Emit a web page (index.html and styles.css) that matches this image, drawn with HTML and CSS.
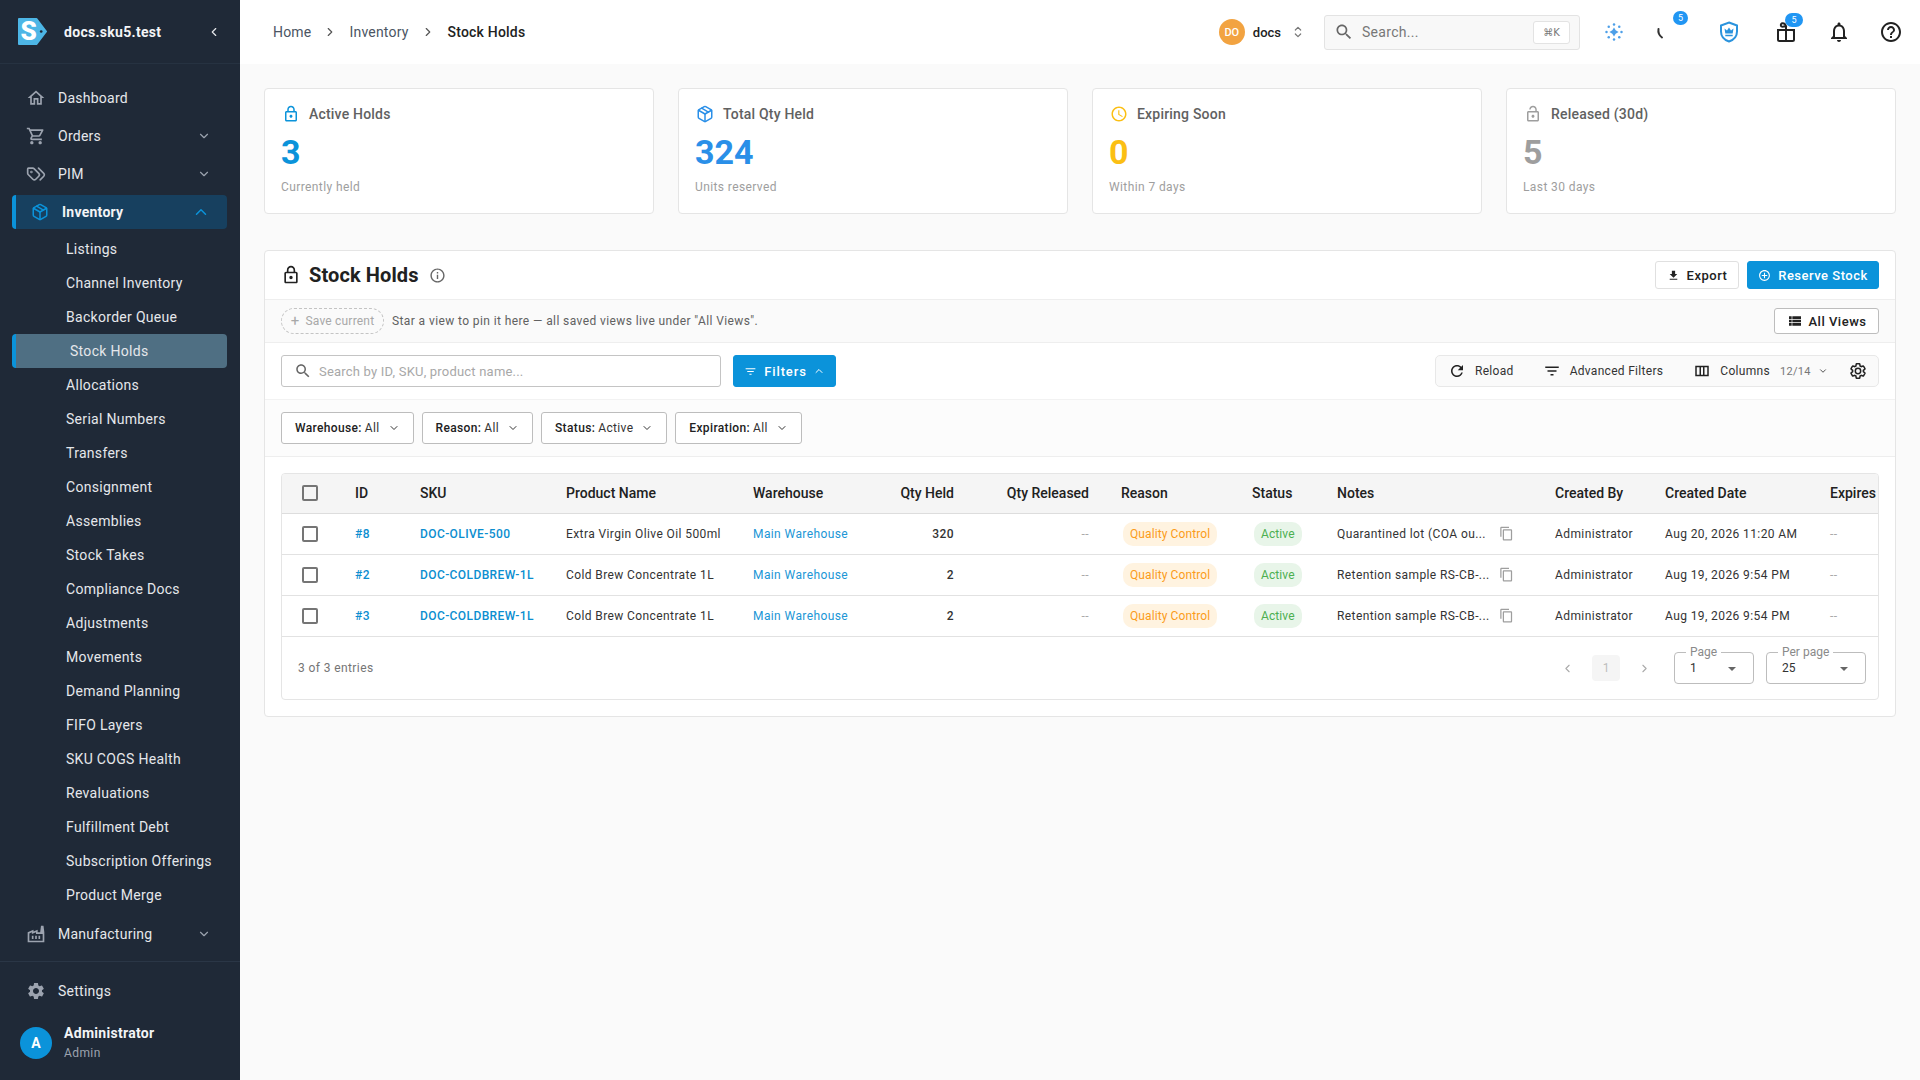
FILE: index.html
```html
<!doctype html>
<html lang="en">
  <head>
    <meta charset="UTF-8" />
    <meta name="viewport" content="width=device-width, initial-scale=1.0" />
    <title>Stock Holds</title>
    <link rel="stylesheet" href="styles.css">
  </head>
  <body>
    <!-- shared icons -->
    <svg class="sprite" xmlns="http://www.w3.org/2000/svg">
      <symbol id="i-lock" viewBox="0 0 24 24"><path d="M18 8h-1V6c0-2.76-2.24-5-5-5S7 3.24 7 6v2H6c-1.1 0-2 .9-2 2v10c0 1.1.9 2 2 2h12c1.1 0 2-.9 2-2V10c0-1.1-.9-2-2-2zM9 6c0-1.66 1.34-3 3-3s3 1.34 3 3v2H9V6zm9 14H6V10h12v10zm-6-3c1.1 0 2-.9 2-2s-.9-2-2-2-2 .9-2 2 .9 2 2 2z"/></symbol>
      <symbol id="i-unlock" viewBox="0 0 24 24"><path d="M12 17c1.1 0 2-.9 2-2s-.9-2-2-2-2 .9-2 2 .9 2 2 2zm6-9h-1V6c0-2.76-2.24-5-5-5S7 3.24 7 6h1.9c0-1.71 1.39-3.1 3.1-3.1 1.71 0 3.1 1.39 3.1 3.1v2H6c-1.1 0-2 .9-2 2v10c0 1.1.9 2 2 2h12c1.1 0 2-.9 2-2V10c0-1.1-.9-2-2-2zm0 12H6V10h12v10z"/></symbol>
      <symbol id="i-search" viewBox="0 0 24 24"><path d="M15.5 14h-.79l-.28-.27C15.41 12.59 16 11.11 16 9.5 16 5.91 13.09 3 9.5 3S3 5.91 3 9.5 5.91 16 9.5 16c1.61 0 3.09-.59 4.23-1.57l.27.28v.79l5 4.99L20.49 19l-4.99-5zm-6 0C7.01 14 5 11.99 5 9.5S7.01 5 9.5 5 14 7.01 14 9.5 11.99 14 9.5 14z"/></symbol>
      <symbol id="i-box" viewBox="0 0 24 24"><g fill="none" stroke="currentColor" stroke-width="2" stroke-linecap="round" stroke-linejoin="round"><path d="M11 21.73a2 2 0 0 0 2 0l7-4A2 2 0 0 0 21 16V8a2 2 0 0 0-1-1.73l-7-4a2 2 0 0 0-2 0l-7 4A2 2 0 0 0 3 8v8a2 2 0 0 0 1 1.73z"/><path d="M12 22V12"/><path d="M3.3 7l8.7 5 8.7-5"/><path d="M7.5 4.27l9 5.15"/></g></symbol>
      <symbol id="i-gear" viewBox="0 0 24 24"><path d="M19.14 12.94c.04-.3.06-.61.06-.94 0-.32-.02-.64-.07-.94l2.03-1.58c.18-.14.23-.41.12-.61l-1.92-3.32c-.12-.22-.37-.29-.59-.22l-2.39.96c-.5-.38-1.03-.7-1.62-.94l-.36-2.54c-.04-.24-.24-.41-.48-.41h-3.84c-.24 0-.43.17-.47.41l-.36 2.54c-.59.24-1.13.57-1.62.94l-2.39-.96c-.22-.08-.47 0-.59.22L2.74 8.87c-.12.21-.08.47.12.61l2.03 1.58c-.05.3-.09.63-.09.94s.02.64.07.94l-2.03 1.58c-.18.14-.23.41-.12.61l1.92 3.32c.12.22.37.29.59.22l2.39-.96c.5.38 1.03.7 1.62.94l.36 2.54c.05.24.24.41.48.41h3.84c.24 0 .44-.17.47-.41l.36-2.54c.59-.24 1.13-.56 1.62-.94l2.39.96c.22.08.47 0 .59-.22l1.92-3.32c.12-.22.07-.47-.12-.61l-2.01-1.58zM12 15.6c-1.98 0-3.6-1.62-3.6-3.6s1.62-3.6 3.6-3.6 3.6 1.62 3.6 3.6-1.62 3.6-3.6 3.6z"/></symbol>
      <symbol id="i-down" viewBox="0 0 24 24"><path d="M6 9l6 6 6-6" fill="none" stroke="currentColor" stroke-width="2" stroke-linecap="round" stroke-linejoin="round"/></symbol>
      <symbol id="i-up" viewBox="0 0 24 24"><path d="M6 15l6-6 6 6" fill="none" stroke="currentColor" stroke-width="2" stroke-linecap="round" stroke-linejoin="round"/></symbol>
      <symbol id="i-right" viewBox="0 0 24 24"><path d="M9 6l6 6-6 6" fill="none" stroke="currentColor" stroke-width="2" stroke-linecap="round" stroke-linejoin="round"/></symbol>
      <symbol id="i-left" viewBox="0 0 24 24"><path d="M15 6l-6 6 6 6" fill="none" stroke="currentColor" stroke-width="2" stroke-linecap="round" stroke-linejoin="round"/></symbol>
      <symbol id="i-filter" viewBox="0 0 24 24"><path d="M10 18h4v-2h-4v2zM3 6v2h18V6H3zm3 7h12v-2H6v2z"/></symbol>
      <symbol id="i-copy" viewBox="0 0 24 24"><path d="M16 1H4c-1.1 0-2 .9-2 2v14h2V3h12V1zm3 4H8c-1.1 0-2 .9-2 2v14c0 1.1.9 2 2 2h11c1.1 0 2-.9 2-2V7c0-1.1-.9-2-2-2zm0 16H8V7h11v14z"/></symbol>
    </svg>

    <div class="app">
      <aside class="sidebar">
        <div class="brand">
          <svg class="brand-logo" viewBox="0 0 30 30">
            <path d="M1 2h18l10 13-10 13H1z" fill="#4db6e6" stroke="#4db6e6" stroke-width="2" stroke-linejoin="round"/>
            <circle cx="24" cy="15" r="1.4" fill="#1f2937"/>
            <text x="11" y="24" class="brand-s">S</text>
          </svg>
          <span class="brand-name">docs.sku5.test</span>
          <svg class="icon brand-toggle"><use href="#i-left"/></svg>
        </div>

        <nav class="nav">
          <a class="nav-item">
            <svg class="nav-icon" viewBox="0 0 24 24"><path d="M12 5.69l5 4.5V18h-2v-6H9v6H7v-7.81l5-4.5M12 3L2 12h3v8h6v-6h2v6h6v-8h3L12 3z"/></svg>
            <span>Dashboard</span>
          </a>
          <a class="nav-item">
            <svg class="nav-icon" viewBox="0 0 24 24"><path d="M15.55 13c.75 0 1.41-.41 1.75-1.03l3.58-6.49c.37-.66-.11-1.48-.87-1.48H5.21l-.94-2H1v2h2l3.6 7.59-1.35 2.44C4.52 15.37 5.48 17 7 17h12v-2H7l1.1-2h7.45zM6.16 6h12.15l-2.76 5H8.53L6.16 6zM7 18c-1.1 0-1.99.9-1.99 2S5.9 22 7 22s2-.9 2-2-.9-2-2-2zm10 0c-1.1 0-1.99.9-1.99 2s.89 2 1.99 2 2-.9 2-2-.9-2-2-2z"/></svg>
            <span>Orders</span>
            <svg class="icon nav-chevron"><use href="#i-down"/></svg>
          </a>
          <a class="nav-item">
            <svg class="nav-icon nav-icon-line" viewBox="0 0 24 24"><path d="M15 5l6.3 6.3a2.4 2.4 0 0 1 0 3.4L17 19"/><path d="M9.586 5.586A2 2 0 0 0 8.172 5H3a1 1 0 0 0-1 1v5.172a2 2 0 0 0 .586 1.414L8.29 18.29a2.426 2.426 0 0 0 3.42 0l3.58-3.58a2.426 2.426 0 0 0 0-3.42z"/><circle cx="6.5" cy="9.5" r=".5"/></svg>
            <span>PIM</span>
            <svg class="icon nav-chevron"><use href="#i-down"/></svg>
          </a>
          <a class="nav-item nav-open">
            <svg class="icon nav-open-icon"><use href="#i-box"/></svg>
            <span>Inventory</span>
            <svg class="icon nav-open-chevron"><use href="#i-up"/></svg>
          </a>
          <ul class="subnav">
            <li>Listings</li>
            <li>Channel Inventory</li>
            <li>Backorder Queue</li>
            <li class="current">Stock Holds</li>
            <li>Allocations</li>
            <li>Serial Numbers</li>
            <li>Transfers</li>
            <li>Consignment</li>
            <li>Assemblies</li>
            <li>Stock Takes</li>
            <li>Compliance Docs</li>
            <li>Adjustments</li>
            <li>Movements</li>
            <li>Demand Planning</li>
            <li>FIFO Layers</li>
            <li>SKU COGS Health</li>
            <li>Revaluations</li>
            <li>Fulfillment Debt</li>
            <li>Subscription Offerings</li>
            <li>Product Merge</li>
          </ul>
          <a class="nav-item">
            <svg class="nav-icon" viewBox="0 0 24 24"><path d="M22 22H2V10l7-3v2l5-2v3h3l1-8h3l1 8v12zM12 9.95l-5 2V10l-3 1.32V20h16v-8h-8V9.95zM11 18h2v-4h-2v4zm-4 0h2v-4H7v4zm10-4h-2v4h2v-4z"/></svg>
            <span>Manufacturing</span>
            <svg class="icon nav-chevron"><use href="#i-down"/></svg>
          </a>
        </nav>

        <div class="sidebar-foot">
          <a class="nav-item">
            <svg class="nav-icon"><use href="#i-gear"/></svg>
            <span>Settings</span>
          </a>
          <div class="user">
            <span class="user-avatar">A</span>
            <div>
              <div class="user-name">Administrator</div>
              <div class="user-role">Admin</div>
            </div>
          </div>
        </div>
      </aside>

      <div class="main">
        <header class="topbar">
          <div class="crumbs">
            <span>Home</span>
            <svg class="icon"><use href="#i-right"/></svg>
            <span>Inventory</span>
            <svg class="icon"><use href="#i-right"/></svg>
            <span class="crumb-now">Stock Holds</span>
          </div>
          <div class="top-actions">
            <div class="tenant">
              <span class="tenant-avatar">DO</span>
              <span class="tenant-name">docs</span>
              <svg class="tenant-sort" viewBox="0 0 24 24"><path d="M8 9l4-4 4 4M8 15l4 4 4-4" fill="none" stroke="currentColor" stroke-width="1.8" stroke-linecap="round" stroke-linejoin="round"/></svg>
            </div>
            <div class="top-search">
              <svg class="icon"><use href="#i-search"/></svg>
              <span class="top-search-text">Search...</span>
              <kbd class="kbd">⌘K</kbd>
            </div>
            <svg class="top-icon top-sparkle" viewBox="0 0 24 24">
              <path d="M12 6.5l2 3.5 3.5 2-3.5 2-2 3.5-2-3.5-3.5-2 3.5-2z"/>
              <circle cx="12" cy="3" r="1.5"/><circle cx="12" cy="21" r="1.5"/><circle cx="3" cy="12" r="1.5"/><circle cx="21" cy="12" r="1.5"/>
              <circle cx="5.7" cy="5.7" r="1.5"/><circle cx="18.3" cy="5.7" r="1.5"/><circle cx="5.7" cy="18.3" r="1.5"/><circle cx="18.3" cy="18.3" r="1.5"/>
            </svg>
            <span class="top-btn top-moon">
              <svg class="top-icon" viewBox="0 0 24 24"><path d="M9.5 9c-.6 3.5.8 6.500 3.500 8.500" fill="none" stroke="#333" stroke-width="2" stroke-linecap="round"/></svg>
              <span class="badge">5</span>
            </span>
            <svg class="top-icon top-shield" viewBox="0 0 24 24">
              <path d="M12 2.500l8 3v6c0 4.800-3.300 8.400-8 10-4.700-1.600-8-5.200-8-10v-6z" fill="none" stroke="currentColor" stroke-width="2"/>
              <path d="M7.500 8.500l2.500 2 2-3 2 3 2.500-2-.8 5H8.300zM8.300 14.800h7.400v1.400H8.300z" fill="currentColor"/>
            </svg>
            <span class="top-btn top-gift">
              <svg class="top-icon" viewBox="0 0 24 24"><g fill="none" stroke="#222" stroke-width="2"><rect x="4" y="10" width="16" height="11" rx="1.500"/><path d="M3 10h18M12 6v15M12 6c-1.500-4-6-3.500-5 0 .3 1 2 1 5 0z"/></g></svg>
              <span class="badge">5</span>
            </span>
            <svg class="top-icon top-bell" viewBox="0 0 24 24"><path d="M12 22c1.100 0 2-.9 2-2h-4c0 1.100.9 2 2 2zm6-6v-5c0-3.070-1.630-5.640-4.500-6.320V4c0-.83-.67-1.500-1.500-1.500s-1.500.67-1.500 1.500v.68C7.640 5.360 6 7.920 6 11v5l-2 2v1h16v-1l-2-2zm-2 1H8v-6c0-2.480 1.510-4.500 4-4.500s4 2.020 4 4.500v6z"/></svg>
            <svg class="top-icon top-help" viewBox="0 0 24 24"><path d="M11 18h2v-2h-2v2zm1-16C6.480 2 2 6.480 2 12s4.480 10 10 10 10-4.480 10-10S17.520 2 12 2zm0 18c-4.410 0-8-3.590-8-8s3.590-8 8-8 8 3.590 8 8-3.590 8-8 8zm0-14c-2.210 0-4 1.790-4 4h2c0-1.100.9-2 2-2s2 .9 2 2c0 2-3 1.750-3 5h2c0-2.250 3-2.500 3-5 0-2.210-1.790-4-4-4z"/></svg>
          </div>
        </header>

        <main class="content">
          <section class="stats">
            <div class="stat">
              <div class="stat-head"><svg class="icon stat-icon tone-sky"><use href="#i-lock"/></svg>Active Holds</div>
              <div class="stat-value tone-sky">3</div>
              <div class="stat-note">Currently held</div>
            </div>
            <div class="stat">
              <div class="stat-head"><svg class="icon stat-icon tone-blue"><use href="#i-box"/></svg>Total Qty Held</div>
              <div class="stat-value tone-blue">324</div>
              <div class="stat-note">Units reserved</div>
            </div>
            <div class="stat">
              <div class="stat-head">
                <svg class="stat-icon tone-amber" viewBox="0 0 24 24"><path d="M11.990 2C6.470 2 2 6.480 2 12s4.470 10 9.990 10C17.520 22 22 17.520 22 12S17.520 2 11.990 2zM12 20c-4.420 0-8-3.580-8-8s3.580-8 8-8 8 3.580 8 8-3.580 8-8 8zm.5-13H11v6l5.250 3.150.75-1.230-4.500-2.670z"/></svg>
                Expiring Soon
              </div>
              <div class="stat-value tone-amber">0</div>
              <div class="stat-note">Within 7 days</div>
            </div>
            <div class="stat">
              <div class="stat-head"><svg class="icon stat-icon tone-grey"><use href="#i-unlock"/></svg>Released (30d)</div>
              <div class="stat-value tone-grey">5</div>
              <div class="stat-note">Last 30 days</div>
            </div>
          </section>

          <section class="panel">
            <div class="panel-head">
              <svg class="icon panel-lock"><use href="#i-lock"/></svg>
              <h1>Stock Holds</h1>
              <svg class="panel-info" viewBox="0 0 24 24"><path d="M11 7h2v2h-2zm0 4h2v6h-2zm1-9C6.480 2 2 6.480 2 12s4.480 10 10 10 10-4.480 10-10S17.520 2 12 2zm0 18c-4.410 0-8-3.590-8-8s3.590-8 8-8 8 3.590 8 8-3.590 8-8 8z"/></svg>
              <button class="btn btn-plain btn-export">
                <svg viewBox="0 0 24 24"><path d="M19 9h-4V3H9v6H5l7 7 7-7zM5 18v2h14v-2H5z"/></svg>Export
              </button>
              <button class="btn btn-primary btn-reserve">
                <svg viewBox="0 0 24 24"><path d="M13 7h-2v4H7v2h4v4h2v-4h4v-2h-4V7zm-1-5C6.480 2 2 6.480 2 12s4.480 10 10 10 10-4.480 10-10S17.520 2 12 2zm0 18c-4.410 0-8-3.590-8-8s3.590-8 8-8 8 3.590 8 8-3.590 8-8 8z"/></svg>Reserve Stock
              </button>
            </div>

            <div class="views-row">
              <span class="save-view"><b>+</b> Save current</span>
              <span class="views-hint">Star a view to pin it here — all saved views live under "All Views".</span>
              <button class="btn btn-plain btn-views">
                <svg viewBox="0 0 24 24"><path d="M3 14h4v-4H3v4zm0 5h4v-4H3v4zM3 9h4V5H3v4zm5 5h13v-4H8v4zm0 5h13v-4H8v4zM8 5v4h13V5H8z"/></svg>All Views
              </button>
            </div>

            <div class="search-row">
              <div class="search-box">
                <svg class="icon"><use href="#i-search"/></svg>
                <span>Search by ID, SKU, product name...</span>
              </div>
              <button class="btn btn-primary btn-filters">
                <svg viewBox="0 0 24 24"><use href="#i-filter"/></svg>Filters
                <svg class="btn-caret"><use href="#i-up"/></svg>
              </button>
              <div class="tools">
                <span class="tool tool-reload">
                  <svg viewBox="0 0 24 24"><path d="M17.650 6.350C16.200 4.900 14.210 4 12 4c-4.420 0-7.990 3.580-7.990 8s3.570 8 7.990 8c3.730 0 6.840-2.550 7.730-6h-2.080c-.82 2.330-3.040 4-5.650 4-3.310 0-6-2.690-6-6s2.690-6 6-6c1.660 0 3.140.69 4.220 1.780L13 11h7V4l-2.350 2.350z"/></svg>Reload
                </span>
                <span class="tool tool-advanced">
                  <svg><use href="#i-filter"/></svg>Advanced Filters
                </span>
                <span class="tool tool-columns">
                  <svg viewBox="0 0 24 24"><path d="M3 5v14h18V5H3zm2 2h3.670v10H5V7zm5.670 10V7h2.660v10h-2.660zM19 17h-3.670V7H19v10z"/></svg>Columns
                  <em class="tool-count">12/14</em>
                  <svg class="tool-caret"><use href="#i-down"/></svg>
                </span>
                <svg class="tool-gear" viewBox="0 0 24 24"><use href="#i-gear"/></svg>
              </div>
            </div>

            <div class="filter-row">
              <button class="filter-chip"><b>Warehouse:</b> All<svg><use href="#i-down"/></svg></button>
              <button class="filter-chip"><b>Reason:</b> All<svg><use href="#i-down"/></svg></button>
              <button class="filter-chip"><b>Status:</b> Active<svg><use href="#i-down"/></svg></button>
              <button class="filter-chip"><b>Expiration:</b> All<svg><use href="#i-down"/></svg></button>
            </div>

            <div class="table-area">
              <div class="table-wrap">
                <table class="holds">
                  <colgroup>
                    <col class="c-check"><col class="c-id"><col class="c-sku"><col class="c-name"><col class="c-wh"><col class="c-qty"><col class="c-rel"><col class="c-reason"><col class="c-status"><col class="c-notes"><col class="c-by"><col class="c-date"><col class="c-exp">
                  </colgroup>
                  <thead>
                    <tr>
                      <th><span class="check"></span></th>
                      <th>ID</th><th>SKU</th><th>Product Name</th><th>Warehouse</th>
                      <th class="num">Qty Held</th><th class="num">Qty Released</th>
                      <th>Reason</th><th>Status</th><th>Notes</th><th>Created By</th><th>Created Date</th><th>Expires</th>
                    </tr>
                  </thead>
                  <tbody>
                    <tr>
                      <td><span class="check"></span></td>
                      <td><a class="link link-strong">#8</a></td>
                      <td><a class="link link-strong">DOC-OLIVE-500</a></td>
                      <td>Extra Virgin Olive Oil 500ml</td>
                      <td><a class="link">Main Warehouse</a></td>
                      <td class="num qty">320</td>
                      <td class="num dash">--</td>
                      <td><span class="pill pill-orange">Quality Control</span></td>
                      <td><span class="pill pill-green">Active</span></td>
                      <td><div class="note"><span>Quarantined lot (COA ou...</span><svg><use href="#i-copy"/></svg></div></td>
                      <td>Administrator</td>
                      <td>Aug 20, 2026 11:20 AM</td>
                      <td class="dash">--</td>
                    </tr>
                    <tr>
                      <td><span class="check"></span></td>
                      <td><a class="link link-strong">#2</a></td>
                      <td><a class="link link-strong">DOC-COLDBREW-1L</a></td>
                      <td>Cold Brew Concentrate 1L</td>
                      <td><a class="link">Main Warehouse</a></td>
                      <td class="num qty">2</td>
                      <td class="num dash">--</td>
                      <td><span class="pill pill-orange">Quality Control</span></td>
                      <td><span class="pill pill-green">Active</span></td>
                      <td><div class="note"><span>Retention sample RS-CB-...</span><svg><use href="#i-copy"/></svg></div></td>
                      <td>Administrator</td>
                      <td>Aug 19, 2026 9:54 PM</td>
                      <td class="dash">--</td>
                    </tr>
                    <tr>
                      <td><span class="check"></span></td>
                      <td><a class="link link-strong">#3</a></td>
                      <td><a class="link link-strong">DOC-COLDBREW-1L</a></td>
                      <td>Cold Brew Concentrate 1L</td>
                      <td><a class="link">Main Warehouse</a></td>
                      <td class="num qty">2</td>
                      <td class="num dash">--</td>
                      <td><span class="pill pill-orange">Quality Control</span></td>
                      <td><span class="pill pill-green">Active</span></td>
                      <td><div class="note"><span>Retention sample RS-CB-...</span><svg><use href="#i-copy"/></svg></div></td>
                      <td>Administrator</td>
                      <td>Aug 19, 2026 9:54 PM</td>
                      <td class="dash">--</td>
                    </tr>
                  </tbody>
                </table>
                <div class="pager">
                  <span class="pager-count">3 of 3 entries</span>
                  <svg class="pager-arrow"><use href="#i-left"/></svg>
                  <span class="pager-num">1</span>
                  <svg class="pager-arrow"><use href="#i-right"/></svg>
                  <div class="select select-page"><label>Page</label>1<i></i></div>
                  <div class="select select-per"><label>Per page</label>25<i></i></div>
                </div>
              </div>
            </div>
          </section>
        </main>
      </div>
    </div>
  </body>
</html>
```

FILE: styles.css
```css
* {
  box-sizing: border-box;
}

html,
body {
  margin: 0;
  height: 100%;
}

body {
  font-family: Roboto, "Liberation Sans", sans-serif;
  font-size: 14px;
  color: #212121;
  background: #fafafa;
  overflow: hidden;
}

.sprite {
  display: none;
}

.icon {
  width: 16px;
  height: 16px;
  fill: currentColor;
  flex: none;
}

.app {
  display: flex;
  height: 100vh;
}

/* sidebar */
.sidebar {
  width: 240px;
  flex: none;
  background: #1f2937;
  color: #e5e7eb;
  display: flex;
  flex-direction: column;
}

.brand {
  height: 64px;
  display: flex;
  align-items: center;
  padding-left: 18px;
  border-bottom: 1px solid #263241;
}

.brand-logo {
  width: 29px;
  height: 29px;
  margin-right: 17px;
}

.brand-s {
  font-family: Roboto, sans-serif;
  font-size: 27px;
  font-weight: 900;
  fill: #fff;
  text-anchor: middle;
}

.brand-name {
  font-size: 14px;
  font-weight: 700;
  letter-spacing: 0.3px;
  color: #f3f4f6;
}

.brand-toggle {
  width: 14px;
  height: 14px;
  margin-left: 46px;
  color: #e5e7eb;
}

.nav {
  padding-top: 15px;
  border-bottom: 1px solid #2a3646;
  padding-bottom: 8px;
}

.nav-item {
  height: 38px;
  display: flex;
  align-items: center;
  padding-left: 26px;
  font-size: 14px;
  letter-spacing: 0.25px;
  color: #e5e7eb;
}

.nav-icon {
  width: 20px;
  height: 20px;
  margin-right: 12px;
  fill: #9ca3af;
  flex: none;
}

.nav-icon-line {
  fill: none;
  stroke: #9ca3af;
  stroke-width: 2;
  stroke-linecap: round;
  stroke-linejoin: round;
}

.nav-chevron {
  width: 14px;
  height: 14px;
  margin-left: auto;
  margin-right: 29px;
  color: #9ca3af;
}

.nav-open {
  height: 34px;
  margin: 2px 13px 2px 12px;
  padding-left: 14px;
  background: #17405f;
  border-left: 4px solid #0b93da;
  border-radius: 4px;
  font-weight: 700;
  color: #f3f4f6;
}

.nav-open-icon {
  width: 18px;
  height: 18px;
  margin-left: 1px;
  margin-right: 13px;
  color: #0b93da;
}

.nav-open-chevron {
  width: 18px;
  height: 18px;
  margin-left: auto;
  margin-right: 17px;
  color: #0b93da;
}

.subnav {
  list-style: none;
  margin: 0;
  padding: 1px 0 3px;
}

.subnav li {
  height: 34px;
  line-height: 34px;
  padding-left: 66px;
  font-size: 14px;
  letter-spacing: 0.3px;
  color: #e5e7eb;
}

.subnav li.current {
  margin: 0 13px 0 12px;
  padding-left: 54px;
  background: #4f6f83;
  border-left: 4px solid #0b93da;
  border-radius: 4px;
}

.sidebar-foot {
  padding-top: 10px;
}

.user {
  display: flex;
  align-items: center;
  margin-top: 13px;
  padding-left: 20px;
}

.user-avatar {
  width: 32px;
  height: 32px;
  margin-right: 12px;
  border-radius: 50%;
  background: #0b93da;
  color: #fff;
  font-size: 14px;
  font-weight: 700;
  display: flex;
  align-items: center;
  justify-content: center;
}

.user-name {
  font-size: 14px;
  font-weight: 700;
  letter-spacing: 0.3px;
  color: #f3f4f6;
  line-height: 20px;
}

.user-role {
  font-size: 12px;
  color: #9ca3af;
  letter-spacing: 0.4px;
  line-height: 20px;
}

/* top bar */
.main {
  flex: 1;
  min-width: 0;
}

.topbar {
  height: 64px;
  background: #fff;
  display: flex;
  align-items: center;
  padding-left: 33px;
}

.crumbs {
  display: flex;
  align-items: center;
  gap: 7px;
  font-size: 14px;
  letter-spacing: 0.2px;
  color: #4b5563;
}

.crumbs .icon {
  width: 14px;
  height: 14px;
  margin: 0 5px;
  color: #555;
}

.crumb-now {
  color: #222;
  font-weight: 500;
  margin-left: 1px;
}

.top-actions {
  margin-left: auto;
  display: flex;
  align-items: center;
  padding-right: 17px;
}

.tenant {
  display: flex;
  align-items: center;
  margin-right: 18px;
}

.tenant-avatar {
  width: 26px;
  height: 26px;
  border-radius: 50%;
  background: #f2a341;
  color: #fff;
  font-size: 11px;
  font-weight: 500;
  display: flex;
  align-items: center;
  justify-content: center;
}

.tenant-name {
  margin-left: 8px;
  font-size: 13px;
  font-weight: 500;
  color: #222;
}

.tenant-sort {
  width: 16px;
  height: 16px;
  margin-left: 9px;
  color: #777;
}

.top-search {
  width: 256px;
  height: 35px;
  display: flex;
  align-items: center;
  padding: 0 9px 0 9px;
  background: #f8f8f8;
  border: 1px solid #e3e3e3;
  border-radius: 3px;
  color: #666;
}

.top-search .icon {
  width: 20px;
  height: 20px;
}

.top-search-text {
  margin-left: 8px;
  color: #777;
  letter-spacing: 0.3px;
}

.kbd {
  margin-left: auto;
  width: 37px;
  height: 23px;
  display: flex;
  align-items: center;
  justify-content: center;
  font-family: "DejaVu Sans", Roboto, sans-serif;
  font-size: 10px;
  color: #777;
  background: #fff;
  border: 1px solid #e3e3e3;
  border-radius: 3px;
}

.top-icon {
  width: 24px;
  height: 24px;
  fill: #222;
  flex: none;
}

.top-sparkle {
  width: 20px;
  height: 20px;
  margin-left: 24px;
  fill: #4d9fe8;
}

.top-btn {
  position: relative;
  display: flex;
}

.top-moon {
  margin-left: 25px;
}

.top-gift {
  margin-left: 33px;
}

.badge {
  position: absolute;
  top: -9px;
  left: 24px;
  min-width: 15px;
  height: 14px;
  border-radius: 8px;
  background: #2196f3;
  color: #fff;
  font-size: 9px;
  line-height: 14px;
  text-align: center;
}

.top-gift .badge {
  left: 11px;
  top: -7px;
  width: 18px;
  height: 14px;
}

.top-shield {
  margin-left: 44px;
  color: #2a93dd;
}

.top-bell {
  margin-left: 29px;
}

.top-help {
  margin-left: 28px;
}

/* page content */
.content {
  padding: 24px;
}

.stats {
  display: grid;
  grid-template-columns: repeat(4, 1fr);
  gap: 24px;
  margin-bottom: 36px;
}

.stat {
  height: 126px;
  padding: 15px 16px;
  background: #fff;
  border: 1px solid #e5e5e5;
  border-radius: 4px;
}

.stat-head {
  display: flex;
  align-items: center;
  height: 20px;
  font-size: 14px;
  font-weight: 500;
  letter-spacing: 0.2px;
  color: #616161;
}

.stat-icon {
  width: 18px;
  height: 18px;
  margin-left: 1px;
  margin-right: 9px;
  flex: none;
}

.stat-value {
  margin-top: 8px;
  font-size: 34px;
  font-weight: 700;
  line-height: 40px;
}

.stat-note {
  margin-top: 8px;
  font-size: 12px;
  letter-spacing: 0.4px;
  color: #9e9e9e;
}

.tone-sky {
  color: #0b93da;
  fill: #0b93da;
}

.tone-blue {
  color: #2a8fe8;
  fill: #2a8fe8;
}

.tone-amber {
  color: #fbbf14;
  fill: #fbbf14;
}

.tone-grey {
  color: #9e9e9e;
  fill: #9e9e9e;
}

.panel {
  height: 467px;
  background: #fff;
  border: 1px solid #e5e5e5;
  border-radius: 4px;
}

.panel-head {
  height: 49px;
  display: flex;
  align-items: center;
  padding: 0 16px;
  border-bottom: 1px solid #eee;
}

.panel-lock {
  width: 20px;
  height: 20px;
  margin-right: 8px;
  color: #222;
  flex: none;
}

.panel-head h1 {
  margin: 0;
  font-size: 20px;
  font-weight: 700;
  letter-spacing: 0.1px;
  color: #212121;
}

.panel-info {
  width: 17px;
  height: 17px;
  margin-left: 10px;
  fill: #666;
}

.btn {
  display: inline-flex;
  align-items: center;
  justify-content: center;
  font-family: inherit;
  font-size: 13px;
  font-weight: 500;
  letter-spacing: 0.5px;
  border-radius: 3px;
  padding: 0;
}

.btn svg {
  width: 13px;
  height: 13px;
  fill: currentColor;
  margin-right: 7px;
}

.btn-plain {
  background: #fff;
  border: 1px solid #e0e0e0;
  color: #222;
}

.btn-primary {
  background: #0b93da;
  border: 1px solid #0b93da;
  color: #fff;
}

.btn-export {
  width: 84px;
  height: 28px;
  margin-left: auto;
}

.btn-reserve {
  width: 132px;
  height: 28px;
  margin-left: 8px;
}

.views-row {
  height: 43px;
  display: flex;
  align-items: center;
  padding: 0 16px;
  background: #fafafa;
  border-bottom: 1px solid #eee;
}

.save-view {
  width: 103px;
  height: 26px;
  display: inline-flex;
  align-items: center;
  justify-content: center;
  gap: 6px;
  border: 1px dashed #c4c4c4;
  border-radius: 13px;
  font-size: 12px;
  letter-spacing: 0.2px;
  color: #a8a8a8;
}

.save-view b {
  font-weight: 400;
  font-size: 15px;
}

.views-hint {
  margin-left: 8px;
  font-size: 12px;
  letter-spacing: 0.4px;
  color: #616161;
}

.btn-views {
  width: 105px;
  height: 26px;
  margin-left: auto;
  border-color: #bdbdbd;
}

.btn-views svg {
  width: 16px;
  height: 16px;
  margin-right: 6px;
}

.search-row {
  height: 57px;
  display: flex;
  align-items: center;
  padding: 0 16px;
  border-bottom: 1px solid #f2f2f2;
}

.search-box {
  width: 440px;
  height: 32px;
  display: flex;
  align-items: center;
  padding-left: 12px;
  border: 1px solid #c4c4c4;
  border-radius: 3px;
  font-size: 13px;
  letter-spacing: 0.2px;
  color: #a8a8a8;
}

.search-box .icon {
  width: 18px;
  height: 18px;
  margin-right: 7px;
  color: #666;
}

.btn-filters {
  width: 103px;
  height: 32px;
  margin-left: 12px;
  letter-spacing: 0.9px;
}

.btn-filters .btn-caret {
  width: 12px;
  height: 12px;
  margin: 0 0 0 6px;
  fill: none;
}

.tools {
  margin-left: auto;
  width: 444px;
  height: 32px;
  display: flex;
  align-items: center;
  background: #fafafa;
  border: 1px solid #e8e8e8;
  border-radius: 5px;
  font-size: 12px;
  letter-spacing: 0.3px;
  color: #333;
}

.tool {
  display: flex;
  align-items: center;
}

.tool svg {
  width: 18px;
  height: 18px;
  fill: #222;
  margin-right: 9px;
  flex: none;
}

.tool-reload {
  margin-left: 12px;
}

.tool-advanced {
  margin-left: 29px;
}

.tool-columns {
  margin-left: 30px;
}

.tool-count {
  margin-left: 10px;
  font-style: normal;
  font-size: 11px;
  color: #777;
}

.tool svg.tool-caret {
  width: 10px;
  height: 10px;
  margin: 0 0 0 7px;
  color: #333;
}

.tool-gear {
  width: 18px;
  height: 18px;
  margin-left: 21px;
  fill: none;
  stroke: #222;
  stroke-width: 2;
}

.filter-row {
  height: 57px;
  display: flex;
  align-items: center;
  gap: 8px;
  padding: 0 16px;
  background: #fcfcfc;
  border-bottom: 1px solid #eee;
}

.filter-chip {
  height: 32px;
  display: inline-flex;
  align-items: center;
  gap: 3px;
  padding: 0 13px;
  background: #fff;
  border: 1px solid #bdbdbd;
  border-radius: 3px;
  font-family: inherit;
  font-size: 12px;
  letter-spacing: 0.35px;
  color: #333;
}

.filter-chip b {
  font-weight: 500;
  color: #212121;
}

.filter-chip svg {
  width: 12px;
  height: 12px;
  margin-left: 5px;
  color: #333;
}

.table-area {
  padding: 16px 16px 0;
}

.table-wrap {
  height: 227px;
  border: 1px solid #e5e5e5;
  border-radius: 4px;
  overflow: hidden;
}

.holds {
  width: 1613px;
  table-layout: fixed;
  border-collapse: collapse;
  font-size: 12px;
  letter-spacing: 0.4px;
  color: #333;
}

.c-check { width: 57px; }
.c-id { width: 65px; }
.c-sku { width: 146px; }
.c-name { width: 187px; }
.c-wh { width: 120px; }
.c-qty { width: 113px; }
.c-rel { width: 135px; }
.c-reason { width: 131px; }
.c-status { width: 85px; }
.c-notes { width: 218px; }
.c-by { width: 110px; }
.c-date { width: 165px; }
.c-exp { width: 81px; }

.holds th {
  height: 39px;
  padding: 0 16px;
  background: #f5f5f5;
  border-bottom: 1px solid #ddd;
  font-size: 14px;
  font-weight: 500;
  letter-spacing: 0;
  text-align: left;
  color: #212121;
  white-space: nowrap;
}

.holds td {
  height: 41px;
  padding: 0 16px;
  border-bottom: 1px solid #e2e2e2;
  white-space: nowrap;
}

.holds .num {
  text-align: right;
}

.qty {
  font-weight: 500;
}

.dash {
  color: #aaa;
}

.check {
  display: block;
  width: 16px;
  height: 16px;
  margin-left: 4px;
  border: 2px solid #757575;
  border-radius: 2px;
}

.link {
  color: #2196d6;
}

.link-strong {
  color: #0b8ed0;
  font-weight: 500;
}

.pill {
  display: inline-block;
  height: 24px;
  line-height: 24px;
  margin-left: 2px;
  padding: 0 7px;
  border-radius: 10px;
  letter-spacing: 0.1px;
}

.pill-orange {
  background: #fff3e0;
  color: #fb9c1a;
}

.pill-green {
  background: #e8f5e9;
  color: #4caf50;
}

.note {
  display: flex;
  align-items: center;
}

.note span {
  width: 170px;
  overflow: hidden;
}

.note svg {
  width: 15px;
  height: 15px;
  fill: #9e9e9e;
  margin-left: -8px;
}

.pager {
  height: 63px;
  display: flex;
  align-items: center;
  padding: 0 12px 0 16px;
  font-size: 12px;
}

.pager-count {
  margin-right: auto;
  letter-spacing: 0.4px;
  color: #757575;
}

.pager-arrow {
  width: 13px;
  height: 13px;
  color: #aaa;
}

.pager-num {
  width: 28px;
  height: 26px;
  margin: 0 18px;
  background: #f5f5f5;
  border-radius: 4px;
  color: #bdbdbd;
  display: flex;
  align-items: center;
  justify-content: center;
}

.select {
  position: relative;
  height: 32px;
  display: flex;
  align-items: center;
  padding-left: 15px;
  border: 1px solid #bdbdbd;
  border-radius: 4px;
  font-size: 12px;
  color: #333;
}

.select label {
  position: absolute;
  top: -8px;
  left: 11px;
  padding: 0 4px;
  background: #fff;
  line-height: 14px;
  color: #8a8a8a;
}

.select i {
  position: absolute;
  right: 17px;
  top: 14px;
  border: 4px solid transparent;
  border-top-color: #666;
  border-bottom: 0;
}

.select-page {
  width: 80px;
  margin-left: 23px;
}

.select-per {
  width: 100px;
  margin-left: 12px;
}
```
